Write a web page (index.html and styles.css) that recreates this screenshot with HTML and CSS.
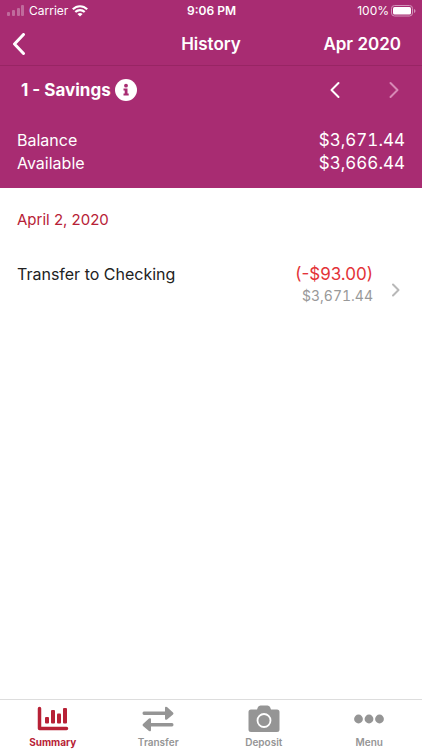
FILE: index.html
```html
<!DOCTYPE html>
<html lang="en">
<head>
<meta charset="utf-8">
<meta name="viewport" content="width=device-width, initial-scale=1">
<title>History</title>
<link rel="stylesheet" href="styles.css">
</head>
<body>
<div class="app">
  <header class="header">
    <div class="status">
      <div class="status-left">
        <svg class="signal" width="18" height="12" viewBox="0 0 18 12" aria-hidden="true"><rect y="7" width="3" height="4" rx="1"/><rect x="5" y="5" width="3" height="6" rx="1"/><rect x="10" y="3" width="3" height="8" rx="1"/><rect x="14" y="0" width="3" height="11" rx="1"/></svg>
        <span>Carrier</span>
        <svg width="16" height="12" viewBox="0 0 16 12" fill="none" stroke="currentColor" stroke-width="2.2" aria-hidden="true"><path d="M.8 4.3C5 .2 11 .2 15.200 4.300"/><path d="M3.300 7C6 4.400 10 4.400 12.700 7"/><path d="M8 11.500 5.400 8.900Q8 6.900 10.600 8.900Z" fill="currentColor" stroke="none"/></svg>
      </div>
      <span class="time">9:06 PM</span>
      <div class="status-right">
        <span>100%</span>
        <svg width="25" height="12" viewBox="0 0 25 12" aria-hidden="true"><rect x=".5" y=".5" width="21" height="10.500" rx="3" fill="none" stroke="#d295b9"/><rect x="2" y="2" width="18" height="7.500" rx="1.500" fill="#fff"/><path d="M23 4v4q1.500-.5 1.500-2T23 4z" fill="#d295b9"/></svg>
      </div>
    </div>
    <nav class="titlebar">
      <button class="icon-button back" type="button" aria-label="Back"><svg width="14" height="22" viewBox="0 0 14 22"><path d="M11.500 1.500 2.500 11l9 9.500"/></svg></button>
      <h1 class="title">History</h1>
      <button class="month" type="button">Apr 2020</button>
    </nav>
  </header>

  <section class="account">
    <div class="account-head">
      <h2 class="account-name">1 - Savings</h2>
      <button class="icon-button info" type="button" aria-label="Account information"><svg width="22" height="22" viewBox="0 0 22 22"><circle cx="11" cy="11" r="11" fill="#fff"/><g fill="#a82c72"><circle cx="11" cy="6.700" r="1.900"/><path d="M8.500 9.500h4v5h1.200v2H8.500v-2h1.200v-3H8.500z"/></g></svg></button>
      <div class="pager">
        <button class="icon-button" type="button" aria-label="Previous account"><svg width="12" height="18" viewBox="0 0 12 18"><path d="m9.500 2-7 7 7 7"/></svg></button>
        <button class="icon-button" type="button" aria-label="Next account" disabled><svg width="12" height="18" viewBox="0 0 12 18"><path d="m2.500 2 7 7-7 7"/></svg></button>
      </div>
    </div>
    <dl class="totals">
      <dt>Balance</dt><dd>$3,671.44</dd>
      <dt>Available</dt><dd>$3,666.44</dd>
    </dl>
  </section>

  <main class="history">
    <h3 class="date">April 2, 2020</h3>
    <a class="entry" href="#transfer">
      <span class="entry-name">Transfer to Checking</span>
      <span class="amounts"><span class="amount">(-$93.00)</span><span class="running">$3,671.44</span></span>
      <svg class="chevron" width="10" height="14" viewBox="0 0 10 14" aria-hidden="true"><path d="m2 1.500 5.500 5.500L2 12.500"/></svg>
    </a>
  </main>

  <nav class="tabs" aria-label="Main">
    <a class="tab active" href="#summary">
      <svg width="32" height="28" viewBox="0 0 32 28" aria-hidden="true"><path d="M2.500 3.500v20h27" fill="none" stroke="currentColor" stroke-width="3.500" stroke-linecap="round" stroke-linejoin="round"/><rect x="8" y="12" width="4" height="6.500" rx="1"/><rect x="14" y="5" width="4" height="13.500" rx="1"/><rect x="20" y="8.500" width="4" height="10" rx="1"/><rect x="26" y="3" width="4" height="15.500" rx="1"/></svg>
      <span>Summary</span>
    </a>
    <a class="tab" href="#transfer-tab">
      <svg width="32" height="28" viewBox="0 0 32 28" aria-hidden="true"><path d="M2 6.500h21V3q0-2 2-1l6 5.500q1 1 0 2L25 14.500q-2 1-2-1V10H2Q.5 10 .5 8.200T2 6.500z"/><path d="M30 18H9v-3.500q0-2-2-1L1 19q-1 1 0 2l6 5q2 1 2-1v-3.500h21q1.500 0 1.500-1.700T30 18z"/></svg>
      <span>Transfer</span>
    </a>
    <a class="tab" href="#deposit">
      <svg width="32" height="28" viewBox="0 0 32 28" aria-hidden="true"><path d="M3 4.500h6L10 2Q10.800.5 12.500.5h7Q21.200.5 22 2l1 2.500h6q2.500 0 2.500 2.500v17.500q0 2.500-2.500 2.500H3Q.5 27 .5 24.500V7Q.5 4.500 3 4.500z"/><circle cx="16" cy="15.500" r="6.500" fill="none" stroke="#fff" stroke-width="1.800"/></svg>
      <span>Deposit</span>
    </a>
    <a class="tab" href="#menu">
      <svg width="32" height="28" viewBox="0 0 32 28" aria-hidden="true"><circle cx="5.500" cy="14" r="4.400"/><circle cx="16" cy="14" r="4.400"/><circle cx="26.500" cy="14" r="4.400"/></svg>
      <span>Menu</span>
    </a>
  </nav>
</div>
</body>
</html>
```
FILE: styles.css
```css
* { box-sizing: border-box; }

body {
  margin: 0;
  background: #fff;
  color: #222;
  font-family: Inter, "Liberation Sans", sans-serif;
  font-size: 16px;
  line-height: 24px;
}

h1, h2, h3, dl, dd { margin: 0; }

button {
  padding: 0;
  border: 0;
  background: none;
  color: inherit;
  font: inherit;
}

a { color: inherit; text-decoration: none; }
svg { display: block; flex: none; }

.app {
  display: flex;
  flex-direction: column;
  min-height: 100vh;
}

.header {
  background: #a82c72;
  color: #fff;
  border-bottom: 1px solid #982564;
}

.status {
  display: grid;
  grid-template-columns: 1fr auto 1fr;
  align-items: center;
  height: 22px;
  padding: 0 6px 0 7px;
  font-size: 12px;
  line-height: 22px;
}

.status-left, .status-right {
  display: flex;
  align-items: center;
  gap: 4px;
}

.status-right { justify-content: flex-end; gap: 2px; }
.signal { fill: #c06b9c; }
.time { font-weight: 600; }

.titlebar {
  display: grid;
  grid-template-columns: 1fr auto 1fr;
  align-items: center;
  height: 43px;
  padding: 0 12px;
}

.titlebar .title, .month { font-size: 17px; font-weight: 600; }
.month { justify-self: end; margin-right: 9px; }
.back { justify-self: start; }

.icon-button path {
  fill: none;
  stroke: currentColor;
  stroke-width: 2;
  stroke-linecap: round;
  stroke-linejoin: round;
}

.back path { stroke-width: 3; }
.info path { fill: #a82c72; stroke: none; }
.icon-button:disabled { color: #d889b6; }

.account {
  padding: 12px 17px 13px;
  background: #a82c72;
  color: #fff;
}

.account-head {
  display: flex;
  align-items: center;
  gap: 4px;
  padding: 0 5px 0 4px;
}

.account-name { font-size: 17px; font-weight: 700; }
.pager { display: flex; gap: 47px; margin-left: auto; }

.totals {
  display: grid;
  grid-template-columns: 1fr auto;
  margin-top: 27px;
  font-size: 16px;
  line-height: 23px;
}

.totals dd, .running { font-variant-numeric: tabular-nums; }
.totals dd { font-size: 17px; text-align: right; }

.history { flex: 1; padding: 20px 17px; }
.date { color: #b72136; font-size: 15px; font-weight: 400; }

.entry {
  display: flex;
  align-items: center;
  margin-top: 30px;
}

.entry-name { align-self: flex-start; }
.amounts { margin-left: auto; text-align: right; }
.amount, .running { display: block; }
.amount { color: #e33338; font-size: 17px; }
.running { color: #999; font-size: 14px; line-height: 20px; }

.chevron {
  margin: 12px 4px 0 18px;
  fill: none;
  stroke: #b8b8b8;
  stroke-width: 2;
  stroke-linecap: round;
  stroke-linejoin: round;
}

.tabs {
  display: grid;
  grid-template-columns: repeat(4, 1fr);
  border-top: 1px solid #ddd;
}

.tab {
  display: flex;
  flex-direction: column;
  align-items: center;
  gap: 2px;
  padding: 5px 0 1px;
  color: #959595;
  fill: currentColor;
  font-size: 10px;
  font-weight: 600;
  line-height: 14px;
}

.active { color: #b72136; font-weight: 700; }
```
